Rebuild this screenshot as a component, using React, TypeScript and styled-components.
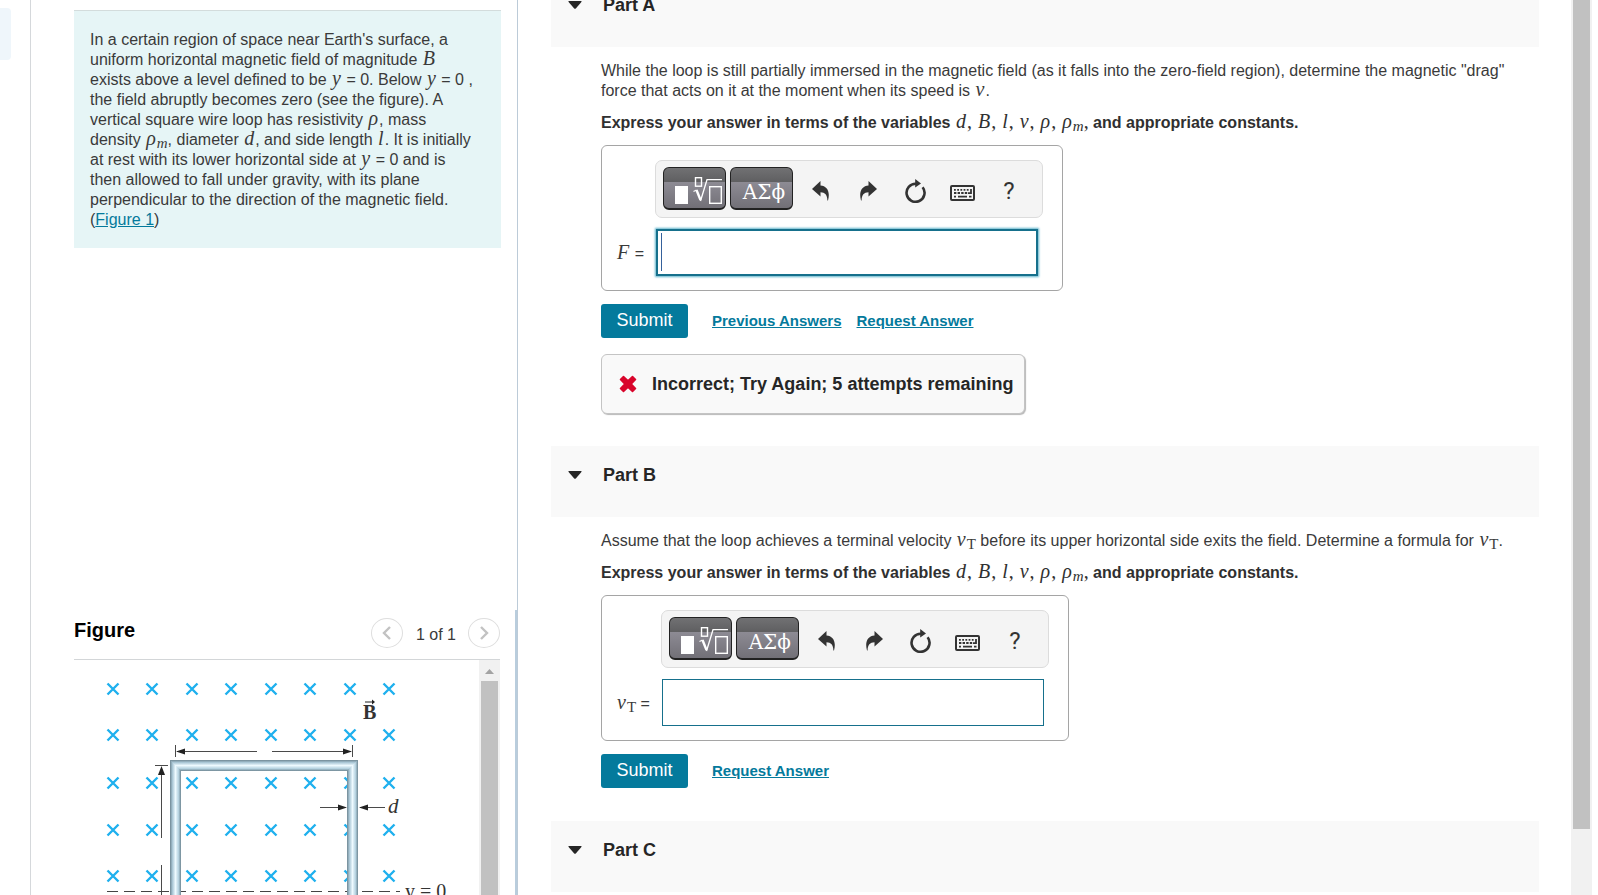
import React from "react";
import styled, { createGlobalStyle, css } from "styled-components";

const teal = "#047a9c";
const sans = `"Liberation Sans", Arial, sans-serif`;
const serif = `"Liberation Serif", "Times New Roman", serif`;

const GlobalStyle = createGlobalStyle`
  * { box-sizing: border-box; }
  body {
    margin: 0;
    background: #fff;
    color: #3a3a3a;
    font-family: ${sans};
    font-size: 16px;
    line-height: 20px;
  }
  button, input { font-family: inherit; }
`;

const Page = styled.div`
  display: flex;
  height: 100vh;
  overflow: hidden;
`;

const Rail = styled.div`
  flex: 0 0 31px;
  padding-top: 8px;
  border-right: 1px solid #d5d8db;
`;

const RailTab = styled.div`
  width: 11px;
  height: 52px;
  border-radius: 0 4px 4px 0;
  background: #eff6fb;
`;

const Sidebar = styled.aside`
  flex: 0 0 487px;
  display: flex;
  flex-direction: column;
  justify-content: space-between;
  border-right: 1px solid #bccbd8;
  overflow: hidden;
`;

const Problem = styled.section`
  margin: 10px 16px 0 43px;
  padding: 19px 16px 18px;
  border-top: 1px solid #d3dcdc;
  background: #e6f5f6;
`;

const Paragraph = styled.p`
  margin: 0;
`;

const Link = styled.a<{ $strong?: boolean }>`
  color: ${teal};
  text-decoration: underline;
  ${(p) =>
    p.$strong &&
    css`
      font-size: 15px;
      font-weight: bold;
    `}
`;

const Var = styled.i`
  padding: 0 1px;
  font-family: ${serif};
  font-size: 20px;
  font-weight: normal;
  line-height: 16px;
`;

const Sub = styled.sub<{ $upright?: boolean }>`
  font-family: ${serif};
  font-size: 15px;
  font-weight: normal;
  font-style: ${(p) => (p.$upright ? "normal" : "italic")};
  line-height: 10px;
  vertical-align: -3px;
`;

const MathList = styled.span`
  font-family: ${serif};
  font-size: 20px;
  font-weight: normal;
  line-height: 16px;
`;

const FigurePanel = styled.section`
  padding: 8px 0 0 43px;
  border-right: 2px solid #b9cddd;
`;

const FigureHeader = styled.header`
  display: flex;
  align-items: center;
  height: 30px;
  margin: 0 15px 11px 0;
`;

const FigureTitle = styled.h2`
  flex: 1;
  margin: 0 0 6px;
  font-size: 20px;
  line-height: 24px;
  color: #000;
`;

const PageCount = styled.span`
  margin: 4px 12px 0 13px;
`;

const RoundButton = styled.button`
  display: flex;
  align-items: center;
  justify-content: center;
  width: 32px;
  height: 30px;
  padding: 0;
  border: 1px solid #dedede;
  border-radius: 50%;
  background: #fff;
`;

const FigureView = styled.div`
  display: flex;
  height: 236px;
  margin-right: 15px;
  border-top: 1px solid #d3d6d8;
`;

const Drawing = styled.svg`
  display: block;
  flex: 1;
  min-width: 0;
  height: 236px;
`;

const InnerTrack = styled.div`
  flex: 0 0 21px;
  display: flex;
  flex-direction: column;
  align-items: center;
  background: #f1f1f1;
`;

const InnerThumb = styled.div`
  flex: 1;
  width: 17px;
  background: #c1c1c1;
`;

const Main = styled.main`
  flex: 1;
  min-width: 0;
  padding: 0 32px 0 33px;
  overflow: hidden;
`;

const Scrolled = styled.div`
  margin-top: -24px;
`;

const PartHeader = styled.header`
  height: 71px;
  padding: 18px 17px;
  background: #f9f9f9;
`;

const PartToggle = styled.button`
  display: flex;
  align-items: center;
  gap: 21px;
  padding: 0;
  border: 0;
  background: none;
  color: #262626;
  font-size: 18px;
  font-weight: bold;
  line-height: 22px;
`;

const PartBody = styled.div<{ $last: number }>`
  padding: 14px 0 ${(p) => p.$last}px 50px;
`;

const Instruction = styled.p`
  margin: 12px 0 12px;
  font-weight: bold;
  color: #303030;
`;

const AnswerBox = styled.div`
  display: flex;
  width: fit-content;
  height: 146px;
  padding: 14px 19px 13px 14px;
  border: 1px solid #a5a5a5;
  border-radius: 6px;
`;

const AnswerLabel = styled.label`
  align-self: flex-end;
  margin-right: 11px;
  padding-bottom: 13px;
  white-space: nowrap;
`;

const AnswerColumn = styled.div`
  display: flex;
  flex-direction: column;
  justify-content: space-between;
  width: 388px;
`;

const Toolbar = styled.div`
  display: flex;
  align-items: center;
  height: 58px;
  padding: 0 7px;
  border: 1px solid #dcdcdc;
  border-radius: 7px;
  background: #f4f4f4;
`;

const PaletteButton = styled.button`
  display: flex;
  align-items: flex-end;
  justify-content: flex-end;
  width: 63px;
  height: 43px;
  margin: 0 4px 2px 0;
  padding: 0 3px 3px 0;
  border: 1px solid #222;
  border-bottom-width: 2px;
  border-radius: 6px;
  background: linear-gradient(#717173 0, #5f5f61 14px, #8d8b94 14px, #727077 100%);
  color: #fff;
`;

const Greek = styled.span`
  padding: 0 4px 0 0;
  font-family: "DejaVu Serif", ${serif};
  font-size: 20px;
  line-height: 26px;
`;

const ToolButton = styled.button`
  display: flex;
  align-items: center;
  justify-content: center;
  width: 47px;
  height: 40px;
  padding: 4px 0 0 1px;
  border: 0;
  background: none;
  color: #333;
  font-family: Roboto, ${sans};
  font-size: 24px;
`;

const FieldWrap = styled.div`
  position: relative;
  width: 384px;
  height: 49px;
`;

const Field = styled.input<{ $active?: boolean }>`
  display: block;
  width: 382px;
  height: 47px;
  margin: 1px;
  padding: 0 6px;
  border: 1px solid #16708c;
  font-size: 20px;
  outline: none;
  ${(p) =>
    p.$active &&
    css`
      border: 2px solid #16708c;
      box-shadow: 0 0 2px 1px #5fb3cb;
    `}
`;

const Caret = styled.span`
  position: absolute;
  top: 5px;
  left: 6px;
  width: 1px;
  height: 38px;
  background: #35619b;
`;

const Actions = styled.div`
  display: flex;
  align-items: center;
  gap: 15px;
  height: 34px;
  margin-top: 13px;
`;

const Submit = styled.button`
  width: 87px;
  height: 34px;
  margin-right: 9px;
  padding: 0 0 2px;
  border: 0;
  border-radius: 3px;
  background: ${teal};
  color: #fff;
  font-size: 18px;
`;

const Feedback = styled.div`
  display: flex;
  align-items: center;
  gap: 15px;
  width: fit-content;
  height: 60px;
  margin-top: 16px;
  padding: 0 11px 0 17px;
  border: 1px solid #c4c4c4;
  border-radius: 6px;
  box-shadow: 1px 1px 1px #b8b8b8;
  background: #f9f9f9;
  color: #262626;
  font-size: 18px;
  font-weight: bold;
`;

const Track = styled.div`
  flex: 0 0 21px;
  margin-right: 6px;
  padding: 0 2px;
  background: #f1f1f1;
`;

const Thumb = styled.div`
  height: 829px;
  background: #c1c1c1;
`;

const Triangle = () => (
  <svg width="14" height="8" viewBox="0 0 14 8" aria-hidden="true">
    <path d="M1 0H13Q14 0 13.4 .9L7.8 7.4Q7 8.2 6.2 7.4L.6 .9Q0 0 1 0Z" fill="#262626" />
  </svg>
);

const Cross = () => (
  <svg width="18" height="18" viewBox="0 0 18 18" aria-hidden="true">
    <path
      d="M4.500 1.500L9 5.800L13.500 1.500L16.500 4.500L12.200 9L16.500 13.500L13.500 16.500L9 12.200L4.500 16.500L1.500 13.500L5.800 9L1.500 4.500Z"
      fill="#d9052b"
      stroke="#d9052b"
      strokeWidth="1.6"
      strokeLinejoin="round"
    />
  </svg>
);

const Chevron = ({ dir }: { dir: "left" | "right" }) => (
  <svg width="10" height="16" viewBox="0 0 10 16" fill="none" stroke="#c2c2c2" strokeWidth="2.4" aria-hidden="true">
    <path d={dir === "left" ? "M8 2L2 8L8 14" : "M2 2L8 8L2 14"} />
  </svg>
);

const RootIcon = () => (
  <svg width="47" height="28" viewBox="0 0 47 28" fill="none" stroke="#fff" aria-hidden="true">
    <rect x="0" y="9" width="13" height="18" fill="#fff" stroke="none" />
    <rect x="20.5" y=".7" width="6" height="8.5" strokeWidth="1.4" />
    <path d="M18.5 14.5L21.5 13" strokeWidth="1.2" />
    <path d="M21.5 13L25.5 23" strokeWidth="2.4" />
    <path d="M25.5 24L32 2.7H47" strokeWidth="1.3" />
    <rect x="34.7" y="9.7" width="11.6" height="16.6" strokeWidth="1.4" />
  </svg>
);

const arrowPath = "M0 8L8.5 0V4.5C15 5 18.5 10.5 16 19.5L15.4 19.5C15.4 14 13 11.5 8.5 11.3V15.5Z";

const UndoIcon = () => (
  <svg width="18" height="20" viewBox="0 0 18 20" fill="#333" aria-hidden="true">
    <path d={arrowPath} />
  </svg>
);

const RedoIcon = () => (
  <svg width="18" height="20" viewBox="0 0 18 20" fill="#333" aria-hidden="true">
    <path d={arrowPath} transform="translate(18 0) scale(-1 1)" />
  </svg>
);

const ResetIcon = () => (
  <svg width="21" height="24" viewBox="0 0 21 24" fill="none" stroke="#333" strokeWidth="2.6" aria-hidden="true">
    <path d="M11 4.8A9 9 0 1 0 17.6 8.2" />
    <path d="M10.2 0L16 4.6L10.2 8.6Z" fill="#333" stroke="none" />
  </svg>
);

const KeyboardIcon = () => (
  <svg width="25" height="20" viewBox="0 -4 25 20" fill="none" stroke="#333" aria-hidden="true">
    <rect x="1" y="1" width="23" height="14" rx="1" strokeWidth="2" />
    <path d="M4 4.8H19" strokeWidth="1.8" strokeDasharray="1.8 1.4" />
    <path d="M4 8H18" strokeWidth="1.8" strokeDasharray="2.4 1.2" />
    <path d="M21 4V8.2H18" strokeWidth="1.8" />
    <path d="M4 11.6H6M8 11.6H17M19 11.6H21.5" strokeWidth="1.8" />
  </svg>
);

const crossColumns = [39, 78, 118, 157, 197, 236, 276, 315];
const crossRows = [29, 75, 123, 170, 216];

const FieldDrawing = () => (
  <Drawing role="img" aria-label="Square loop falling out of a magnetic field">
    <defs>
      <linearGradient id="tubeV" x1="0" x2="1" y1="0" y2="0">
        <stop offset="0" stopColor="#6f8793" />
        <stop offset=".22" stopColor="#a9c6d5" />
        <stop offset=".5" stopColor="#eefaff" />
        <stop offset=".78" stopColor="#b5d2e0" />
        <stop offset="1" stopColor="#6f8793" />
      </linearGradient>
      <linearGradient id="tubeH" x1="0" x2="0" y1="0" y2="1">
        <stop offset="0" stopColor="#6f8793" />
        <stop offset=".22" stopColor="#a9c6d5" />
        <stop offset=".5" stopColor="#eefaff" />
        <stop offset=".78" stopColor="#b5d2e0" />
        <stop offset="1" stopColor="#6f8793" />
      </linearGradient>
    </defs>
    <g stroke="#1fb0ee" strokeWidth="2.4">
      {crossRows.map((y) =>
        crossColumns.map((x) => (
          <path key={`${x}-${y}`} d={`M${x - 5.5} ${y - 5.5}l11 11m0 -11l-11 11`} />
        ))
      )}
    </g>
    <path d="M33 231.5H326" stroke="#444" strokeDasharray="11 6" />
    <path d="M96 240V100H107V240Z" fill="url(#tubeV)" />
    <path d="M273 240V100H284V240Z" fill="url(#tubeV)" />
    <path d="M96 100H284L273 111H107Z" fill="url(#tubeH)" />
    <g stroke="#4a4a4a" fill="none">
      <path d="M101.500 85V97M278.500 85V97" />
      <path d="M103 91.500H183M198 91.500H277" />
      <path d="M81 105.500H94M87.500 108V178M87.500 205V240" />
      <path d="M246 147.500H270M286 147.500H311" />
    </g>
    <g fill="#222">
      <path d="M102 91.500l9 -3v6zM278 91.500l-9 -3v6z" />
      <path d="M87.500 106l-3.500 9h7z" />
      <path d="M273 147.500l-9 -3v6zM285 147.500l9 -3v6z" />
      <path d="M291 41.500H298V39.500L301 42L298 44.500V42.500H291Z" />
    </g>
    <g fontFamily={serif} fill="#333">
      <text x="289" y="59" fontSize="20" fontWeight="bold">B</text>
      <text x="314" y="153" fontSize="21" fontStyle="italic">d</text>
      <text x="331" y="238" fontSize="20">y = 0</text>
    </g>
  </Drawing>
);

const Variables = () => (
  <MathList>
    <Var>d</Var>, <Var>B</Var>, <Var>l</Var>, <Var>v</Var>, <Var>ρ</Var>, <Var>ρ</Var>
    <Sub>m</Sub>,
  </MathList>
);

const VT = () => (
  <>
    <Var>v</Var>
    <Sub $upright>T</Sub>
  </>
);

const ExpressLine = () => (
  <Instruction>
    Express your answer in terms of the variables <Variables /> and appropriate constants.
  </Instruction>
);

const Answer = ({ id, label, active }: { id: string; label: React.ReactNode; active?: boolean }) => (
  <AnswerBox>
    <AnswerLabel htmlFor={id}>{label} =</AnswerLabel>
    <AnswerColumn>
      <Toolbar>
        <PaletteButton aria-label="Templates"><RootIcon /></PaletteButton>
        <PaletteButton aria-label="Symbols"><Greek>ΑΣϕ</Greek></PaletteButton>
        <ToolButton aria-label="Undo"><UndoIcon /></ToolButton>
        <ToolButton aria-label="Redo"><RedoIcon /></ToolButton>
        <ToolButton aria-label="Reset"><ResetIcon /></ToolButton>
        <ToolButton aria-label="Keyboard shortcuts"><KeyboardIcon /></ToolButton>
        <ToolButton aria-label="Help">?</ToolButton>
      </Toolbar>
      <FieldWrap>
        <Field id={id} type="text" $active={active} />
        {active && <Caret />}
      </FieldWrap>
    </AnswerColumn>
  </AnswerBox>
);

const PartHead = ({ name }: { name: string }) => (
  <PartHeader>
    <PartToggle aria-expanded="true">
      <Triangle />
      {name}
    </PartToggle>
  </PartHeader>
);

export default function App() {
  return (
    <>
      <GlobalStyle />
      <Page>
        <Rail>
          <RailTab />
        </Rail>
        <Sidebar>
          <Problem>
            <Paragraph>
              In a certain region of space near Earth's surface, a<br />
              uniform horizontal magnetic field of magnitude <Var>B</Var><br />
              exists above a level defined to be <Var>y</Var> = 0. Below <Var>y</Var> = 0&nbsp;,<br />
              the field abruptly becomes zero (see the figure). A<br />
              vertical square wire loop has resistivity <Var>ρ</Var>, mass<br />
              density <Var>ρ</Var><Sub>m</Sub>, diameter <Var>d</Var>, and side length <Var>l</Var>. It is
              initially<br />
              at rest with its lower horizontal side at <Var>y</Var> = 0 and is<br />
              then allowed to fall under gravity, with its plane<br />
              perpendicular to the direction of the magnetic field.<br />
              (<Link href="#figure">Figure 1</Link>)
            </Paragraph>
          </Problem>
          <FigurePanel id="figure">
            <FigureHeader>
              <FigureTitle>Figure</FigureTitle>
              <RoundButton aria-label="Previous figure"><Chevron dir="left" /></RoundButton>
              <PageCount>1 of 1</PageCount>
              <RoundButton aria-label="Next figure"><Chevron dir="right" /></RoundButton>
            </FigureHeader>
            <FigureView>
              <FieldDrawing />
              <InnerTrack>
                <svg width="21" height="21" viewBox="0 0 21 21" aria-hidden="true">
                  <path d="M6 14L10.500 9L15 14Z" fill="#a3a3a3" />
                </svg>
                <InnerThumb />
              </InnerTrack>
            </FigureView>
          </FigurePanel>
        </Sidebar>
        <Main>
          <Scrolled>
            <PartHead name="Part A" />
            <PartBody $last={32}>
              <Paragraph>
                While the loop is still partially immersed in the magnetic field (as it falls into the
                zero-field region), determine the magnetic "drag" force that acts on it at the moment when
                its speed is <Var>v</Var>.
              </Paragraph>
              <ExpressLine />
              <Answer id="answer-a" label={<Var>F</Var>} active />
              <Actions>
                <Submit>Submit</Submit>
                <Link $strong href="#previous">Previous Answers</Link>
                <Link $strong href="#request-a">Request Answer</Link>
              </Actions>
              <Feedback role="status">
                <Cross />
                Incorrect; Try Again; 5 attempts remaining
              </Feedback>
            </PartBody>
            <PartHead name="Part B" />
            <PartBody $last={33}>
              <Paragraph>
                Assume that the loop achieves a terminal velocity <VT /> before its upper horizontal side
                exits the field. Determine a formula for <VT />.
              </Paragraph>
              <ExpressLine />
              <Answer id="answer-b" label={<VT />} />
              <Actions>
                <Submit>Submit</Submit>
                <Link $strong href="#request-b">Request Answer</Link>
              </Actions>
            </PartBody>
            <PartHead name="Part C" />
          </Scrolled>
        </Main>
        <Track>
          <Thumb />
        </Track>
      </Page>
    </>
  );
}
